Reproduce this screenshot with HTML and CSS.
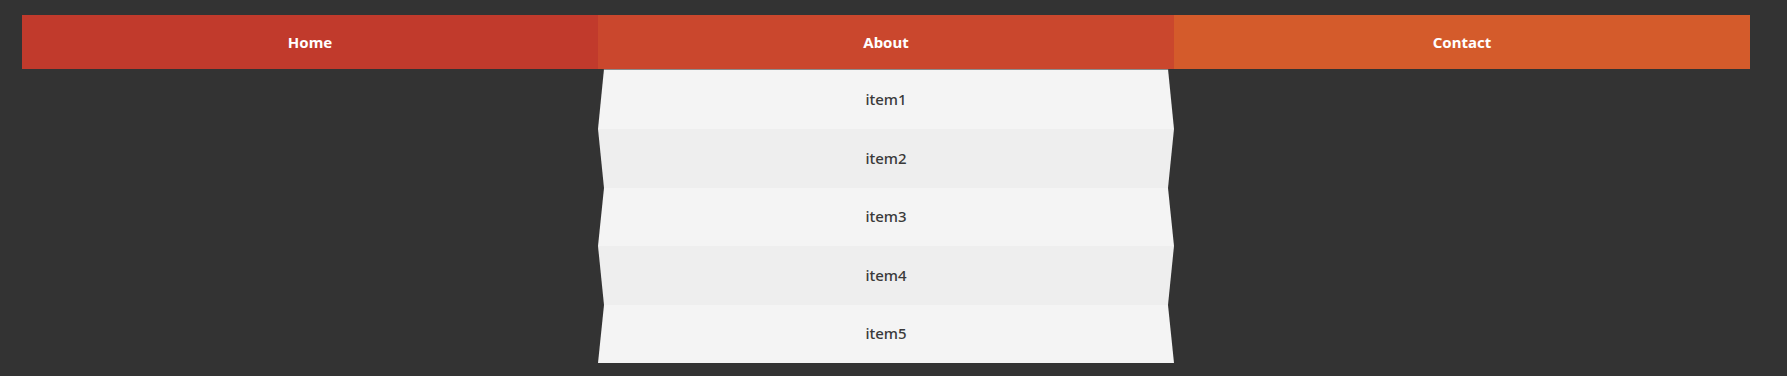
FILE: index.html
```html
<!DOCTYPE html>
<html lang="en">
<head>
    <meta charset="UTF-8">
    <meta name="viewport" content="width=device-width, initial-scale=1.0">
    <title>Folding Dropdown Menu</title>
    <link rel="stylesheet" href="styles.css">
</head>
<body>
    <nav class="menu">
        <div class="menu-item home">Home</div>
        <div class="menu-item about">About</div>
        <div class="menu-item contact">Contact</div>
        <ul class="dropdown">
            <li class="fold fold-out first">item1</li>
            <li class="fold fold-in">item2</li>
            <li class="fold fold-out short">item3</li>
            <li class="fold fold-in">item4</li>
            <li class="fold fold-out short">item5</li>
        </ul>
    </nav>
</body>
</html>
```

FILE: styles.css
```css
body {
    margin: 0;
    padding: 15px 37px 0 22px;
    background-color: #333333;
    font-family: "Noto Sans", "Open Sans", sans-serif;
}

.menu {
    display: grid;
    grid-template-columns: 1fr 1fr 1fr;
    grid-template-rows: 54px auto;
}

.menu-item {
    display: flex;
    align-items: center;
    justify-content: center;
    color: #ffffff;
    font-size: 15px;
    font-weight: bold;
}

.home {
    background-color: #c13a2c;
}

.about {
    background-color: #ca472d;
}

.contact {
    background-color: #d45b2b;
}

.dropdown {
    grid-column: 2;
    grid-row: 2;
    margin: 0;
    padding: 0;
    list-style: none;
}

.fold {
    height: 59px;
    padding-bottom: 2px;
    box-sizing: border-box;
    display: flex;
    align-items: center;
    justify-content: center;
    color: #3a3a3a;
    font-size: 15px;
    font-weight: 500;
}

.fold.first {
    height: 60px;
    border-top: 1px solid #8c8c8c;
}

.fold.short {
    height: 58px;
}

.fold-out {
    background-color: #f4f4f4;
    clip-path: polygon(6px 0, calc(100% - 6px) 0, 100% 100%, 0 100%);
}

.fold-in {
    background-color: #eeeeee;
    clip-path: polygon(0 0, 100% 0, calc(100% - 6px) 100%, 6px 100%);
}
```
